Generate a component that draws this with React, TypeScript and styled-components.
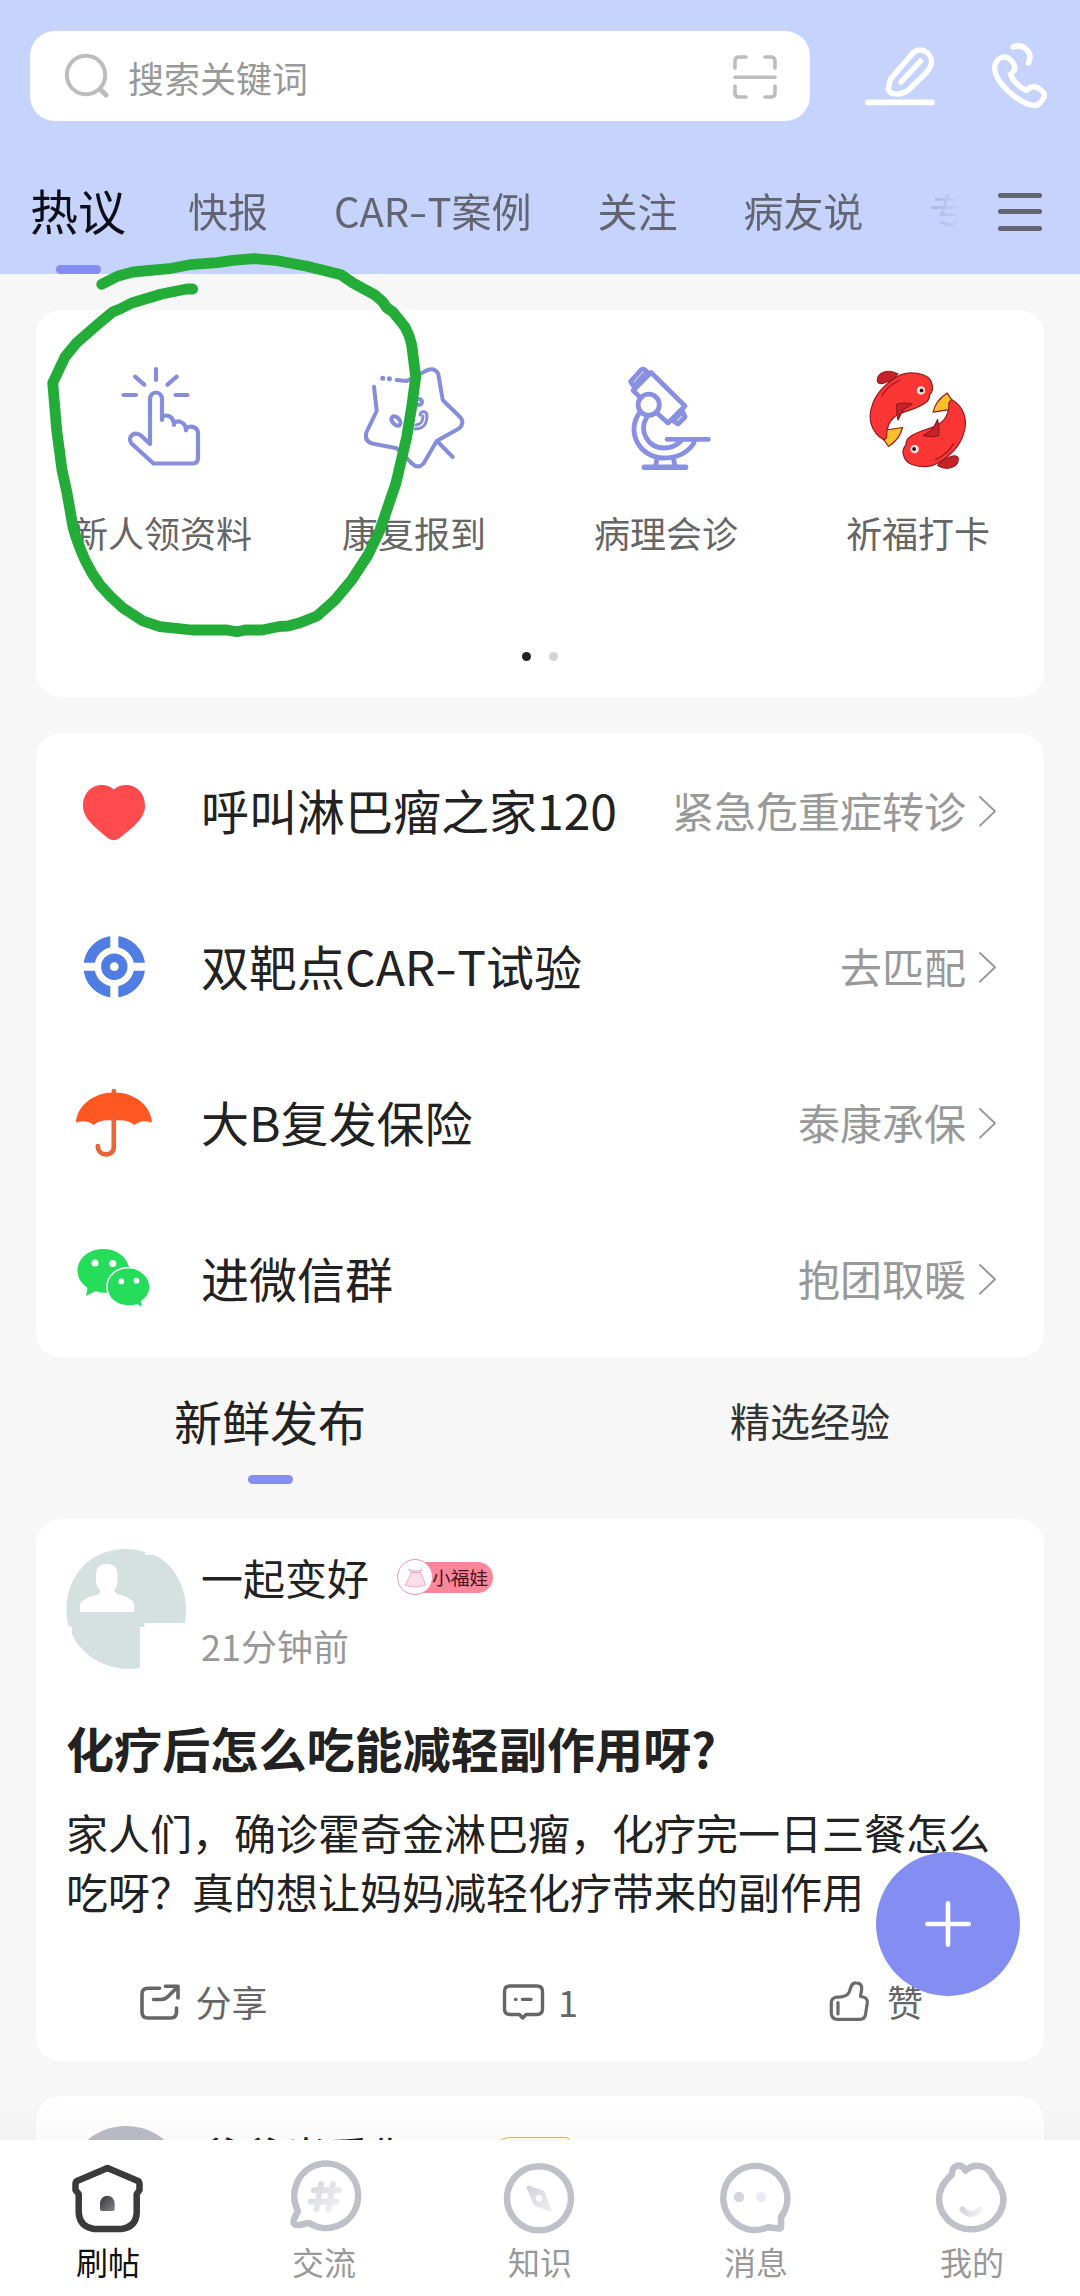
import React from 'react';
import styled, { createGlobalStyle } from 'styled-components';

const ACCENT = '#848ef2';
const LINE = '#868edc';

const GlobalStyle = createGlobalStyle`
  *, *::before, *::after { box-sizing: border-box; }
  body {
    margin: 0;
    background: #f7f7f7;
    font-family: "Noto Sans CJK SC", "Noto Sans", sans-serif;
    color: #222;
  }
  svg { display: block; flex: none; overflow: visible; }
`;

const Page = styled.div`
  position: relative;
  width: 1080px;
  height: 2296px;
  display: flex;
  flex-direction: column;
  overflow: hidden;
  background: #f7f7f7;
`;

const Header = styled.header`
  flex: none;
  height: 274px;
  padding-top: 31px;
  background: #c6d3fc;
  display: flex;
  flex-direction: column;
  justify-content: space-between;
`;

const SearchRow = styled.div`
  display: flex;
  align-items: center;
  height: 90px;
  padding: 0 32px 0 30px;
`;

const SearchBox = styled.div`
  flex: none;
  width: 780px;
  height: 90px;
  padding: 0 33px 0 35px;
  display: flex;
  align-items: center;
  border-radius: 25px;
  background: #fff;
`;

const Placeholder = styled.span`
  flex: 1;
  margin-left: 19px;
  padding-top: 1px;
  font-size: 36px;
  line-height: 50px;
  color: #999;
`;

const HeaderActions = styled.div`
  flex: 1;
  display: flex;
  justify-content: space-between;
  padding-left: 55px;
`;

const ChannelBar = styled.nav`
  display: flex;
  align-items: stretch;
  height: 126px;
  padding: 0 38px 0 30px;
`;

const Channels = styled.div`
  flex: none;
  width: 944px;
  display: flex;
  gap: 66px;
  overflow: hidden;
  mask-image: linear-gradient(to right, #000 86.5%, transparent 98.5%);
`;

const Channel = styled.div<{ $active?: boolean }>`
  flex: none;
  display: flex;
  flex-direction: column;
  align-items: center;
  justify-content: space-between;
  height: 126px;
  margin-right: ${p => (p.$active ? -4 : 0)}px;
  font-size: ${p => (p.$active ? 48 : 40)}px;
  line-height: ${p => (p.$active ? 122 : 125)}px;
  white-space: nowrap;
  color: ${p => (p.$active ? '#0c0f18' : '#62656f')};
`;

const ChannelText = styled.span`
  height: 117px;
`;

const Hyphen = styled.span`
  display: inline-block;
  padding: 0 0.055em;
  transform: scaleX(1.35);
`;

const Marker = styled.i`
  width: 45px;
  height: 9px;
  border-radius: 4.5px;
  background: ${ACCENT};
`;

const MenuButton = styled.div`
  display: flex;
  flex-direction: column;
  gap: 11.5px;
  margin-left: auto;
  padding-top: 44.5px;
`;

const MenuLine = styled.i`
  width: 44px;
  height: 5px;
  border-radius: 3px;
  background: #62656f;
`;

const Feed = styled.main`
  flex: 1;
  min-height: 0;
  overflow: hidden;
  display: flex;
  flex-direction: column;
  padding: 36px 36px 0;
`;

const Card = styled.section`
  flex: none;
  border-radius: 25px;
  background: #fff;
`;

const ShortcutCard = styled(Card)`
  height: 387px;
  display: flex;
  flex-direction: column;
  margin-bottom: 36px;
`;

const ShortcutGrid = styled.div`
  display: grid;
  grid-template-columns: repeat(4, 1fr);
  height: 342px;
  padding-top: 57px;
`;

const Shortcut = styled.div`
  display: flex;
  flex-direction: column;
  align-items: center;
  gap: 36px;
`;

const ShortcutLabel = styled.span`
  font-size: 36px;
  line-height: 54px;
  color: #666;
  white-space: nowrap;
`;

const Dots = styled.div`
  display: flex;
  justify-content: center;
  gap: 18px;
`;

const Dot = styled.i<{ $on?: boolean }>`
  width: 9px;
  height: 9px;
  border-radius: 50%;
  background: ${p => (p.$on ? '#222' : '#d3d3d3')};
`;

const LinkRow = styled.div`
  display: flex;
  align-items: center;
  height: 156px;
  padding: 0 48px 0 33px;
`;

const LinkTitle = styled.span`
  flex: 1;
  margin-left: 42px;
  padding-bottom: 4px;
  font-size: 48px;
  line-height: 70px;
  white-space: nowrap;
`;

const LinkNote = styled.span`
  margin-right: 13px;
  padding-bottom: 2px;
  font-size: 42px;
  line-height: 60px;
  color: #999;
  white-space: nowrap;
`;

const SectionTabs = styled.div`
  flex: none;
  display: grid;
  grid-template-columns: 1fr 1fr;
  height: 162px;
  margin: 0 -36px;
`;

const SectionTab = styled.div<{ $active?: boolean }>`
  display: flex;
  flex-direction: column;
  align-items: center;
  padding-top: 27px;
  font-size: ${p => (p.$active ? 48 : 40)}px;
  line-height: 72px;
  color: ${p => (p.$active ? '#222' : '#333')};
`;

const SectionMarker = styled(Marker)`
  margin-top: 19px;
`;

const Post = styled(Card)`
  height: 542px;
  padding: 30px 30px 0;
  margin-bottom: 35px;
`;

const Author = styled.div`
  display: flex;
  height: 120px;
`;

const AuthorText = styled.div`
  display: flex;
  flex-direction: column;
  margin-left: 15px;
`;

const NameLine = styled.div`
  display: flex;
  align-items: center;
  height: 58px;
`;

const Name = styled.span`
  margin-right: 28px;
  font-size: 42px;
  line-height: 56px;
  white-space: nowrap;
`;

const Time = styled.span`
  margin-top: 14px;
  font-size: 36px;
  line-height: 52px;
  color: #999;
`;

const Badge = styled.div`
  display: flex;
  align-items: center;
  height: 37px;
`;

const BadgeDress = styled.div`
  z-index: 1;
  width: 36px;
  height: 36px;
  display: flex;
  align-items: center;
  justify-content: center;
  border: 1.5px solid #ee94a8;
  border-radius: 50%;
  background: #fff;
`;

const BadgeText = styled.span`
  height: 31px;
  margin-left: -17px;
  padding: 0 5px 0 16px;
  border-radius: 0 16px 16px 0;
  background: #fe869a;
  font-size: 18.7px;
  line-height: 29px;
  color: #43141f;
`;

const PostTitle = styled.h2`
  margin: 43px 0 0;
  font-size: 48px;
  font-weight: 700;
  line-height: 70px;
  letter-spacing: 0.1px;
`;

const PostBody = styled.p`
  margin: 21px 0 0;
  font-size: 42px;
  line-height: 58.5px;
  white-space: nowrap;
`;

const Actions = styled.div`
  display: grid;
  grid-template-columns: repeat(3, 1fr);
  margin: 55px -30px 0;
`;

const Action = styled.div<{ $gap: number }>`
  display: flex;
  align-items: center;
  justify-content: center;
  gap: ${p => p.$gap}px;
  font-size: 36px;
  line-height: 52px;
  color: #666;
`;

const AvatarDisc = styled.div`
  width: 120px;
  height: 120px;
  border-radius: 50%;
  background: #babcc7;
`;

const YellowBadge = styled.div`
  width: 78px;
  height: 37px;
  margin-left: 53px;
  border: 1.5px solid #d9bd55;
  border-radius: 18px 4px 4px 18px;
  background: #fffbe4;
`;

const FeedShade = styled.div`
  position: absolute;
  left: 0;
  right: 0;
  bottom: 156px;
  height: 45px;
  background: linear-gradient(to bottom, rgba(0, 0, 0, 0), rgba(0, 0, 0, 0.02));
`;

const Fab = styled.button`
  position: absolute;
  right: 60px;
  bottom: 300px;
  width: 144px;
  height: 144px;
  display: flex;
  align-items: center;
  justify-content: center;
  padding: 0;
  border: 0;
  border-radius: 50%;
  background: ${ACCENT};
`;

const TabBar = styled.nav`
  flex: none;
  display: grid;
  grid-template-columns: repeat(5, 1fr);
  height: 156px;
  background: #fff;
`;

const Tab = styled.div<{ $active?: boolean }>`
  display: flex;
  flex-direction: column;
  align-items: center;
  padding-top: 18px;
  font-size: 32px;
  line-height: 46px;
  color: ${p => (p.$active ? '#111' : '#999')};
`;

const Scribble = styled.svg`
  position: absolute;
  left: 0;
  top: 230px;
  pointer-events: none;
`;

type GlyphProps = {
  box: string;
  stroke?: string;
  weight?: number;
  children: React.ReactNode;
};

function Glyph({ box, stroke = 'none', weight = 0, children }: GlyphProps) {
  const [, , w, h] = box.split(' ').map(Number);
  return (
    <svg
      width={w}
      height={h}
      viewBox={box}
      fill="none"
      stroke={stroke}
      strokeWidth={weight}
      strokeLinecap="round"
      strokeLinejoin="round"
    >
      {children}
    </svg>
  );
}

const SearchIcon = () => (
  <Glyph box="65 53 44 46" stroke="#bdbdbd" weight={4}>
    <circle cx="86" cy="75" r="19.2" />
    <path d="M100.5 89.5l5.5 5.5" strokeWidth="5" />
  </Glyph>
);

const ScanIcon = () => (
  <Glyph box="733 53 44 46" stroke="#bdbdbd" weight={3.6}>
    <path d="M735 68V61q0-4 4-4h7M765 57h6q4 0 4 4v7M735 86v7q0 4 4 4h7M765 97h6q4 0 4-4v-7M735 77.200h40" />
  </Glyph>
);

const PenIcon = () => (
  <Glyph box="865 43 70 66" stroke="#fff" weight={5.5}>
    <path d="M913 53C922 45 935 55 930.500 66Q929 70 926 73L909 89.500C901 96 890 95 888.300 89.500Q889 83 891 78.500Z" />
    <path d="M920.500 61L901 82" />
    <path d="M868 102.300h64" strokeWidth="5.800" />
  </Glyph>
);

const PhoneIcon = () => (
  <Glyph box="992 43 56 66" stroke="#fff" weight={5.500}>
    <path d="M1013 46.800C1024 43 1033.500 53 1028.500 63" />
    <path d="M994.700 67C995.500 59 1003 54.500 1009 58.500C1016 65 1017 69 1010.500 74.500C1013 81 1020 87 1026.500 90.500C1031 85 1037 85.500 1043 92C1046 96 1043.500 99 1040 103C1035 108 1026 105 1014 96C1003 87 994 76 994.700 67Z" />
  </Glyph>
);

const TapIcon = () => (
  <Glyph box="112 367 100 102" stroke={LINE} weight={4.200}>
    <path d="M156 369v11M135 376.700l9.300 8M176.700 376.700l-9.300 8M123.500 395h12.500M175.500 395h12" />
    <path d="M150 444V399a6 6.500 0 0 1 12 0V420M162 418c3-5 12-2 12 7M174 423.500c3-4 12-2 12 7M186 428.500c5-4 12-1 12 5V458q0 5.500-5.500 5.500H153.500L131.500 443.500C126 436 136 430 142 436.500L150 444" />
  </Glyph>
);

const StarIcon = () => (
  <Glyph box="364 367 100 102" stroke={LINE} weight={4}>
    <path d="M374 386.700L376.700 411L366.500 432Q364 441 372 443.500L396.700 448.300L412 463.500Q418 469.500 423.500 463.500L436.700 441L459 428.500Q465 423.500 460.500 417.500L442.700 400L438.300 374Q435 367.500 427.500 370L406.700 381L396.700 380M437 441L452.700 457" />
    <path d="M382.700 378.200h.01M389.400 378.800h.01" strokeWidth="5" />
    <ellipse cx="396" cy="421" rx="3.500" ry="5.500" transform="rotate(-43 396 421)" />
    <circle cx="419" cy="402" r="3" />
    <path d="M420 415c1-5 7-4 7 1c0 9-5 13-12 13M423 416c0 6-2 8-7 9" strokeWidth="3" />
  </Glyph>
);

const MicroscopeIcon = () => (
  <Glyph box="616 367 100 102" stroke="#8990e2" weight={4.800}>
    <path d="M641 398L633 390.500L651 372.500L685 406L668 423L658 414" />
    <path d="M635 388L630.500 381.700L641 370Q643 368.500 645 370L648 373M636.500 383l7-8" />
    <path d="M682 410L685 417L678 424L672 420M676 418l5-5" />
    <circle cx="648.700" cy="404.700" r="10.600" />
    <path d="M640 412C625 432 640 458 664 458Q684 458 694 443M647 417C638 431 648 448 664 448Q674 448 681 441M667 439.300h41.500" />
    <path d="M657 459l-1.500 7M673.500 459l1.500 7" />
    <path d="M644.500 467.300h41" strokeWidth="5.600" />
  </Glyph>
);

const Fish = () => (
  <g stroke="#96191d" strokeWidth="1.200">
    <path d="M898 374C888 368 876 373 877.500 382C880 386 887 382 894 379Z" fill="#c62329" />
    <path d="M886 430L902.500 427.500Q900 439 888.500 446.500L884 440Z" fill="#fdc02a" />
    <path d="M896.700 377C908 370 929 372 932 384Q934 390 929.500 395Q930 401 922 405C913 410 905 411 899 414Q886 421 886.700 437L884 440C870 432 868 417 872 406C876 392 887 383 896.700 377Z" fill="#fb3634" />
    <path d="M897 404Q905 402 912 404L903 410L898 420Q896 411 897 404Z" fill="#c8232a" />
    <path d="M882 396Q887 386 900 380" />
    <circle cx="921" cy="390.500" r="3.800" fill="#fff" stroke="#f3b2a8" />
    <circle cx="921.500" cy="390.500" r="2" fill="#32110f" stroke="none" />
  </g>
);

const KoiIcon = () => (
  <Glyph box="868 367 100 102">
    <Fish />
    <g transform="rotate(180 917.800 419.800)">
      <Fish />
    </g>
  </Glyph>
);

const HeartIcon = () => (
  <Glyph box="69 766 90 90">
    <path
      d="M113.800 789.500C103 780 83 786 83 806C83 819 97 829 108.500 838.500Q113.800 842 119 838.500C131 829 145 819 145 806C145 786 125 780 113.800 789.500Z"
      fill="#ff4a4e"
    />
  </Glyph>
);

const TargetIcon = () => (
  <Glyph box="69 922 90 90" stroke="#4f7de3">
    <circle cx="114.300" cy="966.700" r="25.300" strokeWidth="11" />
    <path d="M114.300 934v65.500M82 966.700h65" stroke="#fff" strokeWidth="8" strokeLinecap="butt" />
    <circle cx="114.300" cy="966.700" r="13.200" fill="#4f7de3" stroke="none" />
    <circle cx="114.300" cy="966.700" r="4.400" fill="#fff" stroke="none" />
  </Glyph>
);

const UmbrellaIcon = () => (
  <Glyph box="69 1078 90 90">
    <path d="M113.800 1091v4" stroke="#e8643a" strokeWidth="4.500" />
    <path
      d="M76 1122.500C77 1106 93 1092.500 114 1092.500S151 1106 152 1122.500Q141 1119 134.300 1125Q128 1119 114 1120.500Q99 1119 93.700 1125Q87 1119 76 1122.500Z"
      fill="#ff5722"
    />
    <path d="M113.800 1119v28c0 10-16 10-16-1" stroke="#e8643a" strokeWidth="4.600" />
  </Glyph>
);

const WechatIcon = () => (
  <Glyph box="69 1234 90 90">
    <path
      d="M103.300 1249C88 1249 77.500 1259 77.500 1271Q77.500 1281 87.500 1288L86 1296L95.500 1291Q101 1293.500 108 1292.500L129 1267C126 1256 116 1249 103.300 1249Z"
      fill="#25dc5b"
    />
    <path
      d="M128.500 1267.800C116 1267.800 107 1276 107 1287S116 1306 128.500 1306Q133 1306 137 1305L143 1308L141.500 1301.500Q150 1296 150 1287C150 1276 140 1267.800 128.500 1267.800Z"
      fill="#25dc5b"
      stroke="#fff"
      strokeWidth="1.600"
    />
    <g fill="#fff">
      <circle cx="95" cy="1263" r="3.500" />
      <circle cx="112.800" cy="1263.500" r="3.500" />
      <circle cx="121.300" cy="1281.400" r="2.900" />
      <circle cx="136.500" cy="1280.700" r="2.900" />
    </g>
  </Glyph>
);

const Chevron = () => (
  <Glyph box="979 796 17 30" stroke="#999" weight={2}>
    <path d="M980 797l15 14.300l-15 14.300" />
  </Glyph>
);

const Avatar = () => (
  <Glyph box="66 1549 120 120">
    <path
      d="M126 1549Q136 1549 144.500 1552l1 3h8C172 1562 186 1585 186 1609q0 8-1 14H145l-1 4h-4V1668C112 1673 82 1658 72 1634V1627l-3.500-1C59 1585 85 1549 126 1549Z"
      fill="#d5e1e0"
    />
    <path
      d="M96 1575Q96 1564 106.700 1564T117.500 1575V1583Q117 1587 114 1590Q115 1594 119 1594.500Q134.300 1599 134.300 1605V1612H80V1604Q82 1599 99 1594Q101 1592 100 1590Q96 1586 96 1580Z"
      fill="#fff"
    />
  </Glyph>
);

const DressIcon = () => (
  <Glyph box="0 0 23 21" stroke="#f2a9c0" weight={1}>
    <path d="M8 5h8l1.500 3L22 18q-10.500 4-21 0L6.500 8Z" fill="#fcdfeb" />
    <path d="M5 2.500q6.500 3 13 0l-2 3H7.500Z" fill="#fbd0df" />
  </Glyph>
);

const ShareIcon = () => (
  <Glyph box="143 1986 40 37" stroke="#666" weight={3.600}>
    <path d="M162.500 1991.300H151q-6 0-6 6V2015q0 6 6 6H173.500q6 0 6-6V2011M168.500 1989.300H181V2001M156.500 2002.500H164Q168 2002.500 171 1999.500L180 1990.500" />
  </Glyph>
);

const CommentIcon = () => (
  <Glyph box="503 1985 42 38" stroke="#666" weight={3.400}>
    <path d="M511 1989H538q5.500 0 5.500 5.500V2012q0 5.500-5.500 5.500H527L523.700 2021L520.500 2017.500H511q-5.500 0-5.500-5.500V1994.500q0-5.500 5.500-5.500Z" />
    <path d="M516.500 2002.400h.4M523.500 2002.400h8.500" />
  </Glyph>
);

const LikeIcon = () => (
  <Glyph box="830 1982 40 42" stroke="#6b6b6b" weight={3.200}>
    <path d="M832.300 2005Q832 2000 838 1999Q847 1999.500 850 1994.500C852 1990 852 1984.500 857 1984.800Q863 1985 862.700 1991L861.500 1998.500Q869 1999 868.300 2005L866.500 2016.500Q866 2021.300 860.500 2021.300H839Q832.300 2021.300 832.300 2015Z" />
    <path d="M839 2004.500V2016" />
  </Glyph>
);

const PlusIcon = () => (
  <Glyph box="0 0 46 46" stroke="#fff" weight={4.600}>
    <path d="M23 2.300v41.400M2.300 23h41.400" />
  </Glyph>
);

const NAV_GREY = '#bfc0c8';

const HomeIcon = () => (
  <Glyph box="68 2158 80 80" stroke="#3a3a3b" weight={6.500}>
    <defs>
      <linearGradient id="door" x1="0" y1="0" x2="1" y2="1">
        <stop offset="0.200" stopColor="#444447" />
        <stop offset="1" stopColor="#86868b" />
      </linearGradient>
    </defs>
    <path d="M107.500 2168L138 2181Q139.500 2182 139.500 2184V2190L136.700 2194V2213Q136 2227 121 2229H94Q80 2227 78.700 2213V2194L75.500 2190V2184Q75.500 2182 77 2181Z" />
    <path d="M100 2211V2204c0-11 14.700-11 14.700 0v5q0 2-2 2H102Q100 2211 100 2209Z" fill="url(#door)" stroke="none" />
  </Glyph>
);

const TopicIcon = () => (
  <Glyph box="285 2158 80 80" stroke={NAV_GREY} weight={6.500}>
    <defs>
      <linearGradient id="hash" gradientUnits="userSpaceOnUse" x1="312" y1="2184" x2="340" y2="2210">
        <stop offset="0" stopColor="#d6d7dd" />
        <stop offset="1" stopColor="#f1f1f5" />
      </linearGradient>
    </defs>
    <path d="M299 2211A32 32.300 0 1 1 310 2223L300 2225Q293 2226 295 2219Z" />
    <path d="M322 2184L317.500 2209M334 2184L329.500 2209M315 2190.300H340M311.500 2201.800H337.500" stroke="url(#hash)" strokeWidth="6" />
  </Glyph>
);

const CompassIcon = () => (
  <Glyph box="501 2158 80 80" stroke={NAV_GREY} weight={6.500}>
    <defs>
      <linearGradient id="needle" x1="0" y1="0" x2="1" y2="1">
        <stop offset="0" stopColor="#d3d4da" />
        <stop offset="1" stopColor="#ececf1" />
      </linearGradient>
    </defs>
    <circle cx="540" cy="2198.300" r="32" />
    <path d="M529 2187L544 2192L551 2210L536 2204Z" fill="url(#needle)" stroke="url(#needle)" strokeWidth="3" />
    <circle cx="540" cy="2198.300" r="3.200" fill="#fff" stroke="none" />
  </Glyph>
);

const MessageIcon = () => (
  <Glyph box="717 2158 80 80" stroke={NAV_GREY} weight={6.500}>
    <path d="M769 2227.300A32 32 0 1 1 782 2217V2227Q782 2228.500 780 2228.500Z" />
    <circle cx="740" cy="2197" r="5.200" fill="#d4d5dc" stroke="none" />
    <circle cx="762" cy="2197" r="5.200" fill="#ebebf1" stroke="none" />
  </Glyph>
);

const MineIcon = () => (
  <Glyph box="932.500 2158 80 80" stroke={NAV_GREY} weight={6.500}>
    <defs>
      <linearGradient id="smile" gradientUnits="userSpaceOnUse" x1="963" y1="0" x2="981" y2="0">
        <stop offset="0" stopColor="#d6d7dd" />
        <stop offset="1" stopColor="#f1f1f5" />
      </linearGradient>
    </defs>
    <path d="M952.500 2174.500C952 2164 962 2163 966 2170.500C975 2163 989 2164 994 2178C1001 2185 1004 2192 1004 2200A32.300 31 0 0 1 939.500 2200C939.500 2188 946 2180 952.500 2174.500Z" />
    <path d="M963 2209.500Q971.500 2218.500 980 2209.500" stroke="url(#smile)" strokeWidth="6" />
  </Glyph>
);

const CarT = () => (
  <>
    CAR<Hyphen>-</Hyphen>T
  </>
);

const channels = [
  { id: 'news', label: '快报' },
  { id: 'cart', label: <><CarT />案例</> },
  { id: 'follow', label: '关注' },
  { id: 'friends', label: '病友说' },
  { id: 'topic', label: '专' },
];

const shortcuts = [
  { label: '新人领资料', icon: <TapIcon /> },
  { label: '康复报到', icon: <StarIcon /> },
  { label: '病理会诊', icon: <MicroscopeIcon /> },
  { label: '祈福打卡', icon: <KoiIcon /> },
];

const links = [
  { id: 'call', title: '呼叫淋巴瘤之家120', note: '紧急危重症转诊', icon: <HeartIcon /> },
  { id: 'trial', title: <>双靶点<CarT />试验</>, note: '去匹配', icon: <TargetIcon /> },
  { id: 'insurance', title: '大B复发保险', note: '泰康承保', icon: <UmbrellaIcon /> },
  { id: 'wechat', title: '进微信群', note: '抱团取暖', icon: <WechatIcon /> },
];

const tabs = [
  { label: '刷帖', icon: <HomeIcon /> },
  { label: '交流', icon: <TopicIcon /> },
  { label: '知识', icon: <CompassIcon /> },
  { label: '消息', icon: <MessageIcon /> },
  { label: '我的', icon: <MineIcon /> },
];

export default function App() {
  return (
    <Page>
      <GlobalStyle />
      <Header>
        <SearchRow>
          <SearchBox>
            <SearchIcon />
            <Placeholder>搜索关键词</Placeholder>
            <ScanIcon />
          </SearchBox>
          <HeaderActions>
            <PenIcon />
            <PhoneIcon />
          </HeaderActions>
        </SearchRow>
        <ChannelBar>
          <Channels>
            <Channel $active>
              <ChannelText>热议</ChannelText>
              <Marker />
            </Channel>
            {channels.map(c => (
              <Channel key={c.id}>
                <ChannelText>{c.label}</ChannelText>
              </Channel>
            ))}
          </Channels>
          <MenuButton>
            <MenuLine />
            <MenuLine />
            <MenuLine />
          </MenuButton>
        </ChannelBar>
      </Header>

      <Feed>
        <ShortcutCard>
          <ShortcutGrid>
            {shortcuts.map(s => (
              <Shortcut key={s.label}>
                {s.icon}
                <ShortcutLabel>{s.label}</ShortcutLabel>
              </Shortcut>
            ))}
          </ShortcutGrid>
          <Dots>
            <Dot $on />
            <Dot />
          </Dots>
        </ShortcutCard>

        <Card>
          {links.map(l => (
            <LinkRow key={l.id}>
              {l.icon}
              <LinkTitle>{l.title}</LinkTitle>
              <LinkNote>{l.note}</LinkNote>
              <Chevron />
            </LinkRow>
          ))}
        </Card>

        <SectionTabs>
          <SectionTab $active>
            新鲜发布
            <SectionMarker />
          </SectionTab>
          <SectionTab>精选经验</SectionTab>
        </SectionTabs>

        <Post>
          <Author>
            <Avatar />
            <AuthorText>
              <NameLine>
                <Name>一起变好</Name>
                <Badge>
                  <BadgeDress>
                    <DressIcon />
                  </BadgeDress>
                  <BadgeText>小福娃</BadgeText>
                </Badge>
              </NameLine>
              <Time>21分钟前</Time>
            </AuthorText>
          </Author>
          <PostTitle>化疗后怎么吃能减轻副作用呀?</PostTitle>
          <PostBody>
            家人们，确诊霍奇金淋巴瘤，化疗完一日三餐怎么
            <br />
            吃呀？真的想让妈妈减轻化疗带来的副作用
          </PostBody>
          <Actions>
            <Action $gap={15}>
              <ShareIcon />
              分享
            </Action>
            <Action $gap={14}>
              <CommentIcon />1
            </Action>
            <Action $gap={18}>
              <LikeIcon />赞
            </Action>
          </Actions>
        </Post>

        <Post>
          <Author>
            <AvatarDisc />
            <AuthorText>
              <NameLine>
                <Name>爷爷当爱你</Name>
                <YellowBadge />
              </NameLine>
            </AuthorText>
          </Author>
        </Post>
      </Feed>

      <TabBar>
        {tabs.map((t, i) => (
          <Tab key={t.label} $active={i === 0}>
            {t.icon}
            <span>{t.label}</span>
          </Tab>
        ))}
      </TabBar>

      <FeedShade />
      <Fab>
        <PlusIcon />
      </Fab>

      <Scribble width="440" height="420" viewBox="0 230 440 420" fill="none">
        <path
          d="M101.700 284.300L118 276L133 272L171.700 268.300L190 264.700L217 262.700L233 260.300L254 258.700L275 260.300L307 266.300L341 274.700L353 283L375 295L382.700 301.700L386.700 307.700L393 312L405 327Q410 336 411.700 345L415.700 377L411.700 406.700L406.700 437L396 483L380 530L368 555L351.700 580L335 600L317 616L300 622.700L288 626L278 626.700L262 630H245L237 631.700L227 630H192L160 626.700L143 621L123 608Q110 597 100 585Q91 573 85 560Q77 542 73 527L67 493L62 470L56.700 430L52.700 383L65 357L76.700 342.700L95 326.700L113 311.700L120 309L131.700 303L161.700 294L186.700 289H192.700"
          stroke="#23ad38"
          strokeWidth="10.800"
          strokeLinecap="round"
          strokeLinejoin="round"
        />
      </Scribble>
    </Page>
  );
}
